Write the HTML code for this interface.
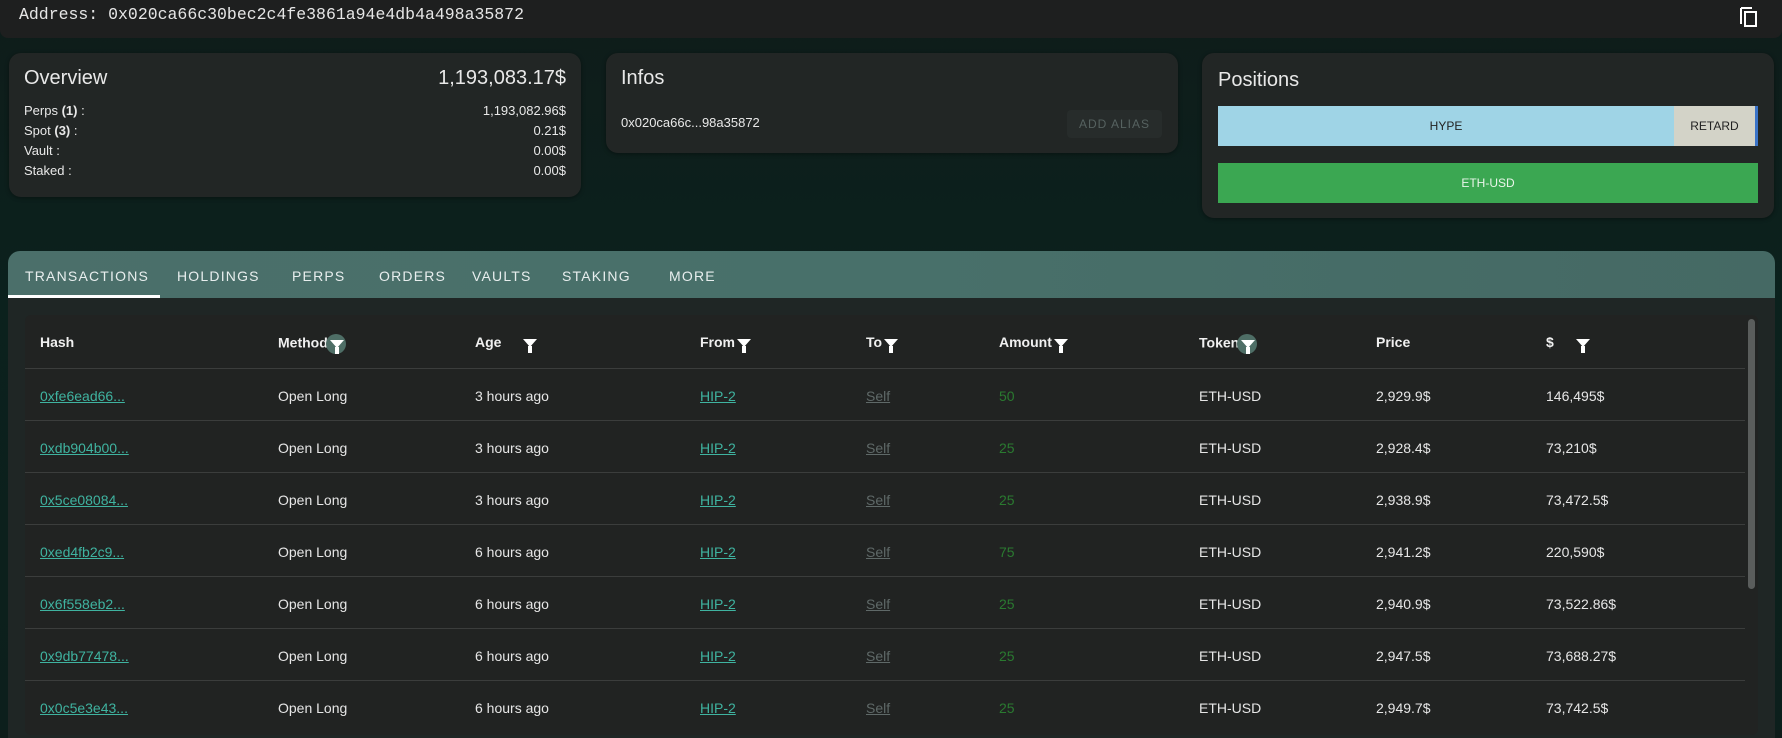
<!DOCTYPE html>
<html><head><meta charset="utf-8"><style>
*{box-sizing:border-box;margin:0;padding:0}
body{width:1782px;height:730px;overflow:hidden;background:linear-gradient(180deg,#0f1c1a 0%,#0b211d 40%,#0c1f1c 100%);font-family:"Liberation Sans",sans-serif;color:#e8e8e8;position:relative}
.top{position:absolute;left:0;top:0;width:1782px;height:38px;background:#1e1f1f;border-radius:0 0 8px 8px}
.addr{position:absolute;left:19px;top:5px;font-family:"Liberation Mono",monospace;font-size:16.5px;color:#e6e6e6}
.card{position:absolute;background:#222625;border-radius:12px;box-shadow:0 1px 4px rgba(0,0,0,.4)}
h2{font-weight:500;font-size:20px;position:absolute}
.ov{left:9px;top:53px;width:572px;height:144px}
.row{position:absolute;left:15px;right:15px;font-size:13px;display:flex;justify-content:space-between}
.inf{left:606px;top:53px;width:572px;height:100px}
.pos{left:1202px;top:53px;width:572px;height:165px}
.tabs{position:absolute;left:8px;top:251px;width:1767px;height:47px;background:linear-gradient(90deg,#4b6f6a,#48706a 50%,#456964);border-radius:12px 12px 0 0}
.tab{position:absolute;top:17px;font-size:14px;letter-spacing:1.2px;font-weight:500;color:#e8eeee}
.panel{position:absolute;left:8px;top:298px;width:1767px;height:440px;background:#1f2625}
.tbl{position:absolute;left:25px;top:315px;width:1733px;height:420px;background:#212322;border-radius:6px}
.th{position:absolute;top:19px;font-size:14px;font-weight:bold;color:#f0f0f0}
.line{position:absolute;left:0;width:1720px;height:1px;background:#3b3d3c}
.c{position:absolute;font-size:14px;color:#e6e6e6}
.lk{color:#3fb3a0;text-decoration:underline}
.sf{color:#5f6968;text-decoration:underline}
.am{color:#2a7a30}
.f{display:inline-block;width:0;height:0;border-left:7px solid transparent;border-right:7px solid transparent;border-top:8px solid #fff;position:relative;vertical-align:middle;margin-left:2px}
.f:after{content:"";position:absolute;left:-2px;top:-1px;width:4px;height:7px;background:#fff}
.fc{display:inline-block;width:20px;height:20px;border-radius:50%;background:#4e6e66;vertical-align:middle;text-align:center;line-height:18px;margin-left:-2px}
</style></head><body>
<div class="top"><div class="addr">Address: 0x020ca66c30bec2c4fe3861a94e4db4a498a35872</div>
<svg style="position:absolute;left:1738px;top:4px" width="22" height="24" viewBox="0 0 22 24"><path d="M3 4v16" stroke="#fff" stroke-width="2" fill="none"/><path d="M3 4h11" stroke="#fff" stroke-width="2"/><rect x="7" y="8" width="11" height="14" stroke="#fff" stroke-width="2" fill="none"/></svg></div>

<div class="card ov"><h2 style="left:15px;top:14px">Overview</h2><h2 style="right:15px;top:14px">1,193,083.17$</h2>
<div class="row" style="top:50px"><span>Perps <b>(1)</b> :</span><span>1,193,082.96$</span></div>
<div class="row" style="top:70px"><span>Spot <b>(3)</b> :</span><span>0.21$</span></div>
<div class="row" style="top:90px"><span>Vault :</span><span>0.00$</span></div>
<div class="row" style="top:110px"><span>Staked :</span><span>0.00$</span></div></div>

<div class="card inf"><h2 style="left:15px;top:14px">Infos</h2><div style="position:absolute;left:15px;top:62px;font-size:13px">0x020ca66c...98a35872</div>
<div style="position:absolute;left:461px;top:57px;width:95px;height:28px;background:#272c2b;border-radius:4px;font-size:12px;color:#566260;text-align:center;line-height:28px;letter-spacing:1px">ADD ALIAS</div></div>

<div class="card pos"><h2 style="left:16px;top:16px">Positions</h2>
<div style="position:absolute;left:16px;top:53px;width:456px;height:40px;background:#9fd4e6;color:#222;font-size:12px;text-align:center;line-height:40px">HYPE</div>
<div style="position:absolute;left:472px;top:53px;width:81px;height:40px;background:#d3d3c8;color:#222;font-size:12px;text-align:center;line-height:40px">RETARD</div>
<div style="position:absolute;left:553px;top:53px;width:3px;height:40px;background:#3a73c8"></div>
<div style="position:absolute;left:16px;top:110px;width:540px;height:40px;background:#3ba752;color:#eaf5ea;font-size:12px;text-align:center;line-height:40px">ETH-USD</div></div>

<div class="tabs">
<span class="tab" style="left:17px">TRANSACTIONS</span><span class="tab" style="left:169px">HOLDINGS</span><span class="tab" style="left:284px">PERPS</span><span class="tab" style="left:371px">ORDERS</span><span class="tab" style="left:464px">VAULTS</span><span class="tab" style="left:554px">STAKING</span><span class="tab" style="left:661px">MORE</span>
<div style="position:absolute;left:0;top:44px;width:152px;height:3px;background:#fff"></div></div>
<div class="panel"></div>
<div class="tbl">
<div class="th" style="left:15px">Hash</div>
<div class="th" style="left:253px">Method<span class="fc"><span class="f"></span></span></div>
<div class="th" style="left:450px">Age <span class="f" style="margin-left:18px"></span></div>
<div class="th" style="left:675px">From<span class="f"></span></div>
<div class="th" style="left:841px">To<span class="f"></span></div>
<div class="th" style="left:974px">Amount<span class="f"></span></div>
<div class="th" style="left:1174px">Token<span class="fc"><span class="f"></span></span></div>
<div class="th" style="left:1351px">Price</div>
<div class="th" style="left:1521px">$ <span class="f" style="margin-left:18px"></span></div>
<div style="position:absolute;left:1723px;top:4px;width:7px;height:270px;background:#5a5d5c;border-radius:4px"></div>
<div id="rows"></div>
</div>
<script>
var d=[["0xfe6ead66...","3 hours ago","50","2,929.9$","146,495$"],["0xdb904b00...","3 hours ago","25","2,928.4$","73,210$"],["0x5ce08084...","3 hours ago","25","2,938.9$","73,472.5$"],["0xed4fb2c9...","6 hours ago","75","2,941.2$","220,590$"],["0x6f558eb2...","6 hours ago","25","2,940.9$","73,522.86$"],["0x9db77478...","6 hours ago","25","2,947.5$","73,688.27$"],["0x0c5e3e43...","6 hours ago","25","2,949.7$","73,742.5$"]];
var h="";d.forEach(function(r,i){var y=54+i*52;h+='<div class="line" style="top:'+(y-1)+'px"></div>';var t=y+19;
h+='<div class="c lk" style="left:15px;top:'+t+'px">'+r[0]+'</div><div class="c" style="left:253px;top:'+t+'px">Open Long</div><div class="c" style="left:450px;top:'+t+'px">'+r[1]+'</div><div class="c lk" style="left:675px;top:'+t+'px">HIP-2</div><div class="c sf" style="left:841px;top:'+t+'px">Self</div><div class="c am" style="left:974px;top:'+t+'px">'+r[2]+'</div><div class="c" style="left:1174px;top:'+t+'px">ETH-USD</div><div class="c" style="left:1351px;top:'+t+'px">'+r[3]+'</div><div class="c" style="left:1521px;top:'+t+'px">'+r[4]+'</div>';});
document.getElementById("rows").innerHTML=h;
</script>
</body></html>
